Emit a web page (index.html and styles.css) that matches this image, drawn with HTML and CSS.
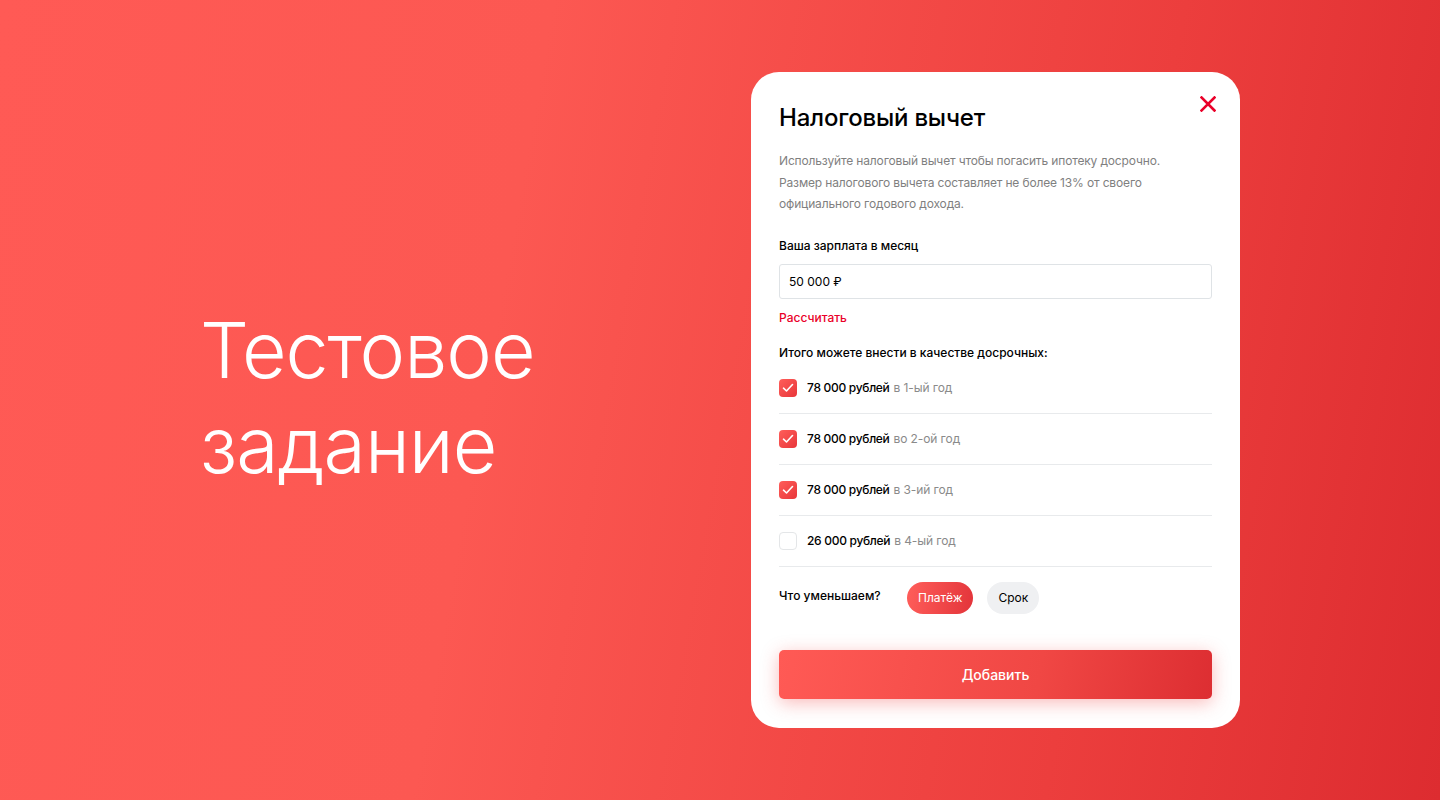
FILE: index.html
```html
<!DOCTYPE html>
<html lang="ru">
<head>
    <meta charset="UTF-8">
    <meta name="viewport" content="width=device-width, initial-scale=1.0">
    <title>Налоговый вычет</title>
    <link rel="stylesheet" href="styles.css">
</head>
<body>

    <div class="page">
        <h1 class="hero">Тестовое<br>задание</h1>

        <div class="modal">
            <button class="close" aria-label="Закрыть">
                <svg width="16" height="16" viewBox="0 0 16 16"><path d="M1.5 1.5 L14.5 14.5 M14.5 1.5 L1.5 14.5" stroke="#ea0029" stroke-width="2.6" stroke-linecap="square"/></svg>
            </button>

            <h2 class="title">Налоговый вычет</h2>
            <p class="desc">Используйте налоговый вычет чтобы погасить ипотеку досрочно.<br>Размер налогового вычета составляет не более 13% от своего<br>официального годового дохода.</p>

            <label class="label salary" for="salary">Ваша зарплата в месяц</label>
            <input class="field" type="text" id="salary" value="50 000 ₽">
            <a class="calc" href="#">Рассчитать</a>

            <div class="label total">Итого можете внести в качестве досрочных:</div>

            <ul class="years">
                <li class="year">
                    <span class="check checked"><svg width="12" height="10" viewBox="0 0 12 10"><path d="M1.5 5.2 L4.5 8 L10.5 1.5" fill="none" stroke="#fff" stroke-width="1.6" stroke-linecap="round" stroke-linejoin="round"/></svg></span>
                    <span class="sum">78 000 рублей</span> <span class="when">в 1-ый год</span>
                </li>
                <li class="year">
                    <span class="check checked"><svg width="12" height="10" viewBox="0 0 12 10"><path d="M1.5 5.2 L4.5 8 L10.5 1.5" fill="none" stroke="#fff" stroke-width="1.6" stroke-linecap="round" stroke-linejoin="round"/></svg></span>
                    <span class="sum">78 000 рублей</span> <span class="when">во 2-ой год</span>
                </li>
                <li class="year">
                    <span class="check checked"><svg width="12" height="10" viewBox="0 0 12 10"><path d="M1.5 5.2 L4.5 8 L10.5 1.5" fill="none" stroke="#fff" stroke-width="1.6" stroke-linecap="round" stroke-linejoin="round"/></svg></span>
                    <span class="sum">78 000 рублей</span> <span class="when">в 3-ий год</span>
                </li>
                <li class="year">
                    <span class="check"></span>
                    <span class="sum">26 000 рублей</span> <span class="when">в 4-ый год</span>
                </li>
            </ul>

            <div class="reduce">
                <span class="reduce-label">Что уменьшаем?</span>
                <button class="pill active">Платёж</button>
                <button class="pill">Срок</button>
            </div>

            <button class="submit">Добавить</button>
        </div>
    </div>

</body>
</html>
```

FILE: styles.css
```css
body {
    margin: 0;
    font-family: 'Inter', 'Noto Sans', sans-serif;
    color: #000;
    background: linear-gradient(100deg, #ff5a55 0%, #fc5852 35%, #ec3e3d 75%, #dd2c30 100%);
    height: 100vh;
    overflow: hidden;
}
.page {
    display: flex;
    align-items: center;
    height: 800px;
    padding-left: 200px;
    box-sizing: border-box;
}
.hero {
    margin: 0;
    width: 551px;
    font-size: 77px;
    line-height: 95px;
    font-weight: 300;
    color: #fff;
    letter-spacing: -1px;
    margin-top: -4px;
}
.modal {
    position: relative;
    width: 489px;
    box-sizing: border-box;
    background: #fff;
    border-radius: 28px;
    padding: 26px 28px 29px;
}
.close {
    position: absolute;
    top: 24px;
    right: 24px;
    width: 16px;
    height: 16px;
    padding: 0;
    border: none;
    background: none;
}
.title {
    margin: 0;
    font-size: 24px;
    line-height: 40px;
    font-weight: 500;
    letter-spacing: -0.2px;
}
.desc {
    margin: 12px 0 0;
    font-size: 12px;
    line-height: 21.5px;
    color: #7f7f7f;
    letter-spacing: -0.15px;
    white-space: nowrap;
}
.label {
    display: block;
    margin-top: 20px;
    font-size: 12px;
    line-height: 16px;
    font-weight: 500;
}
.label.salary {
    margin-top: 23px;
}
.field {
    display: block;
    width: 100%;
    box-sizing: border-box;
    height: 35px;
    margin-top: 10px;
    padding: 0 9px;
    border: 1px solid #dfe3e6;
    border-radius: 3px;
    font-family: inherit;
    font-size: 12px;
    color: #000;
    outline: none;
}
.calc {
    display: block;
    margin-top: 11px;
    font-size: 12px;
    line-height: 16px;
    font-weight: 500;
    color: #ea0029;
    text-decoration: none;
}
.total {
    margin-top: 19px;
}
.years {
    list-style: none;
    margin: 2px 0 0;
    padding: 0;
}
.year {
    display: flex;
    align-items: center;
    height: 50px;
    border-bottom: 1px solid #e8eaec;
    font-size: 12px;
}
.check {
    display: flex;
    align-items: center;
    justify-content: center;
    width: 18px;
    height: 18px;
    box-sizing: border-box;
    margin-right: 10px;
    border-radius: 4px;
    border: 1px solid #e4e6e8;
}
.check.checked {
    border: none;
    background: linear-gradient(135deg, #ff5e5a, #e8363a);
}
.sum {
    font-weight: 500;
    letter-spacing: -0.3px;
    white-space: pre;
}
.when {
    color: #8a8a8a;
    margin-left: 4px;
    letter-spacing: -0.1px;
}
.reduce {
    display: flex;
    align-items: center;
    margin-top: 15px;
}
.reduce-label {
    width: 128px;
    font-size: 12px;
    font-weight: 500;
    margin-top: -4px;
}
.pill {
    height: 32px;
    padding: 0 11px;
    margin-right: 14px;
    border: none;
    border-radius: 16px;
    background: #eff0f2;
    font-family: inherit;
    font-size: 12px;
    color: #000;
}
.pill.active {
    background: linear-gradient(100deg, #ff5e5a, #e3343a);
    color: #fff;
}
.submit {
    display: block;
    width: 100%;
    height: 49px;
    margin-top: 36px;
    border: none;
    border-radius: 5px;
    background: linear-gradient(100deg, #ff5a55 0%, #f04744 60%, #dd2e32 100%);
    box-shadow: 0 4px 18px rgba(240, 60, 60, 0.35);
    color: #fff;
    font-family: inherit;
    font-size: 14px;
    font-weight: 500;
}
```
